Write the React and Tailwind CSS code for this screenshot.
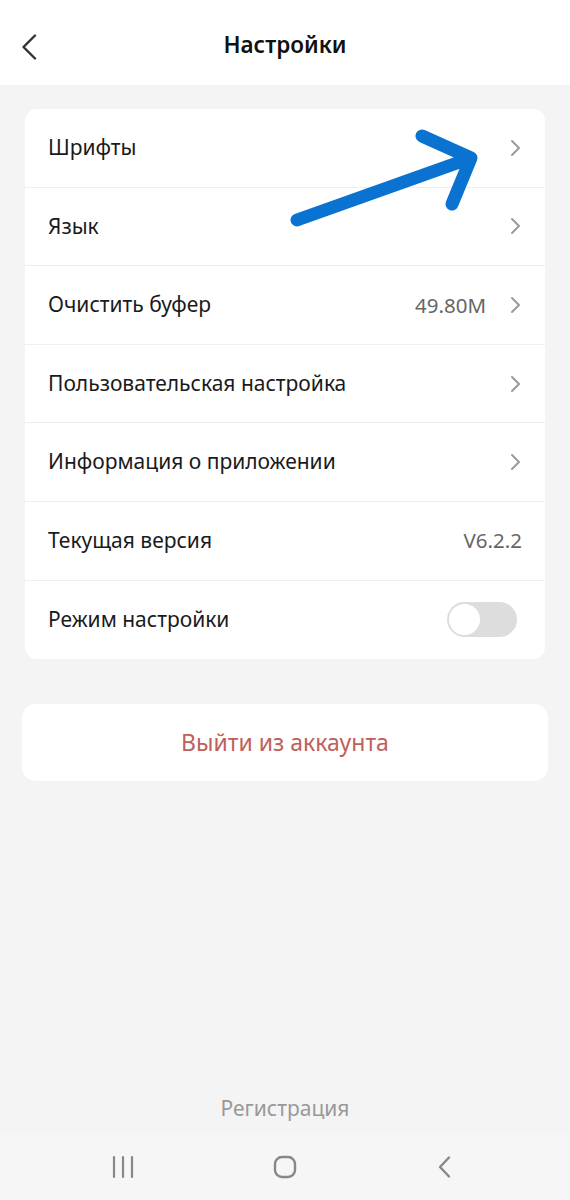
import React from "react";

const rows = [
  { label: "Шрифты", chevron: true },
  { label: "Язык", chevron: true },
  { label: "Очистить буфер", value: "49.80M", chevron: true },
  { label: "Пользовательская настройка", chevron: true },
  { label: "Информация о приложении", chevron: true },
  { label: "Текущая версия", value: "V6.2.2" },
  { label: "Режим настройки", toggle: true },
];

function Chevron() {
  return (
    <svg width="12" height="18" viewBox="0 0 12 18" fill="none" className="ml-6 shrink-0">
      <path d="M2 2l7 7-7 7" stroke="#9a9a9a" strokeWidth="2" strokeLinecap="round" strokeLinejoin="round" />
    </svg>
  );
}

export default function App() {
  return (
    <div className="relative w-[570px] h-[1200px] bg-[#f4f4f4] flex flex-col" style={{ fontFamily: '"Noto Sans", Roboto, sans-serif' }}>
      {/* header */}
      <header className="h-[85px] bg-white flex items-center justify-center relative shrink-0">
        <svg width="16" height="26" viewBox="0 0 16 26" fill="none" className="absolute left-[21px] top-[34px]">
          <path d="M14 1.5L2.5 13 14 24.5" stroke="#333" strokeWidth="2.4" strokeLinecap="round" strokeLinejoin="round" />
        </svg>
        <h1 className="text-[22.5px] font-semibold text-[#111] mt-[5px]">Настройки</h1>
      </header>

      {/* settings list */}
      <section className="mx-[25px] mt-[24px] bg-white rounded-[12px] flex flex-col">
        {rows.map((r, i) => (
          <div
            key={r.label}
            className={`h-[78.6px] flex items-center pl-[23px] pr-[23px] ${i < rows.length - 1 ? "border-b border-[#eeeeee]" : ""}`}
          >
            <span className="flex-1 text-[21px] text-[#1a1a1a]">{r.label}</span>
            {r.value && <span className="text-[20.5px] text-[#666]">{r.value}</span>}
            {r.chevron && <Chevron />}
            {r.toggle && (
              <div className="w-[70px] h-[35px] rounded-full bg-[#dddddd] p-[2px] flex items-center mr-[5px]">
                <div className="w-[31px] h-[31px] rounded-full bg-white" />
              </div>
            )}
          </div>
        ))}
      </section>

      {/* logout */}
      <button className="mx-[22px] mt-[45px] h-[77px] bg-white rounded-[14px] text-[23px] text-[#c0605a]">
        Выйти из аккаунта
      </button>

      <div className="flex-1" />

      <div className="text-center text-[21px] text-[#999] mb-[10px]">Регистрация</div>

      {/* system nav bar */}
      <nav className="h-[66px] bg-[#f6f6f6] flex items-center pl-[111px] pb-[0px] gap-[138px]">
        <svg width="24" height="24" viewBox="0 0 24 24" fill="none">
          <path d="M3 2v20M12 2v20M21 2v20" stroke="#888" strokeWidth="2.2" strokeLinecap="round" />
        </svg>
        <svg width="24" height="24" viewBox="0 0 24 24" fill="none">
          <rect x="2" y="2" width="20" height="20" rx="7" stroke="#888" strokeWidth="2.4" />
        </svg>
        <svg width="24" height="24" viewBox="0 0 24 24" fill="none" className="ml-[-3px]">
          <path d="M17 2.5L8 12l9 9.5" stroke="#888" strokeWidth="2.4" strokeLinecap="round" strokeLinejoin="round" />
        </svg>
      </nav>

      {/* hand-drawn arrow annotation */}
      <svg className="absolute left-0 top-0 pointer-events-none" width="570" height="300" viewBox="0 0 570 300" fill="none">
        <path
          d="M297 220L471 158M422 136L471 158L452 204"
          stroke="#0a72d1"
          strokeWidth="13"
          strokeLinecap="round"
          strokeLinejoin="round"
        />
      </svg>
    </div>
  );
}
